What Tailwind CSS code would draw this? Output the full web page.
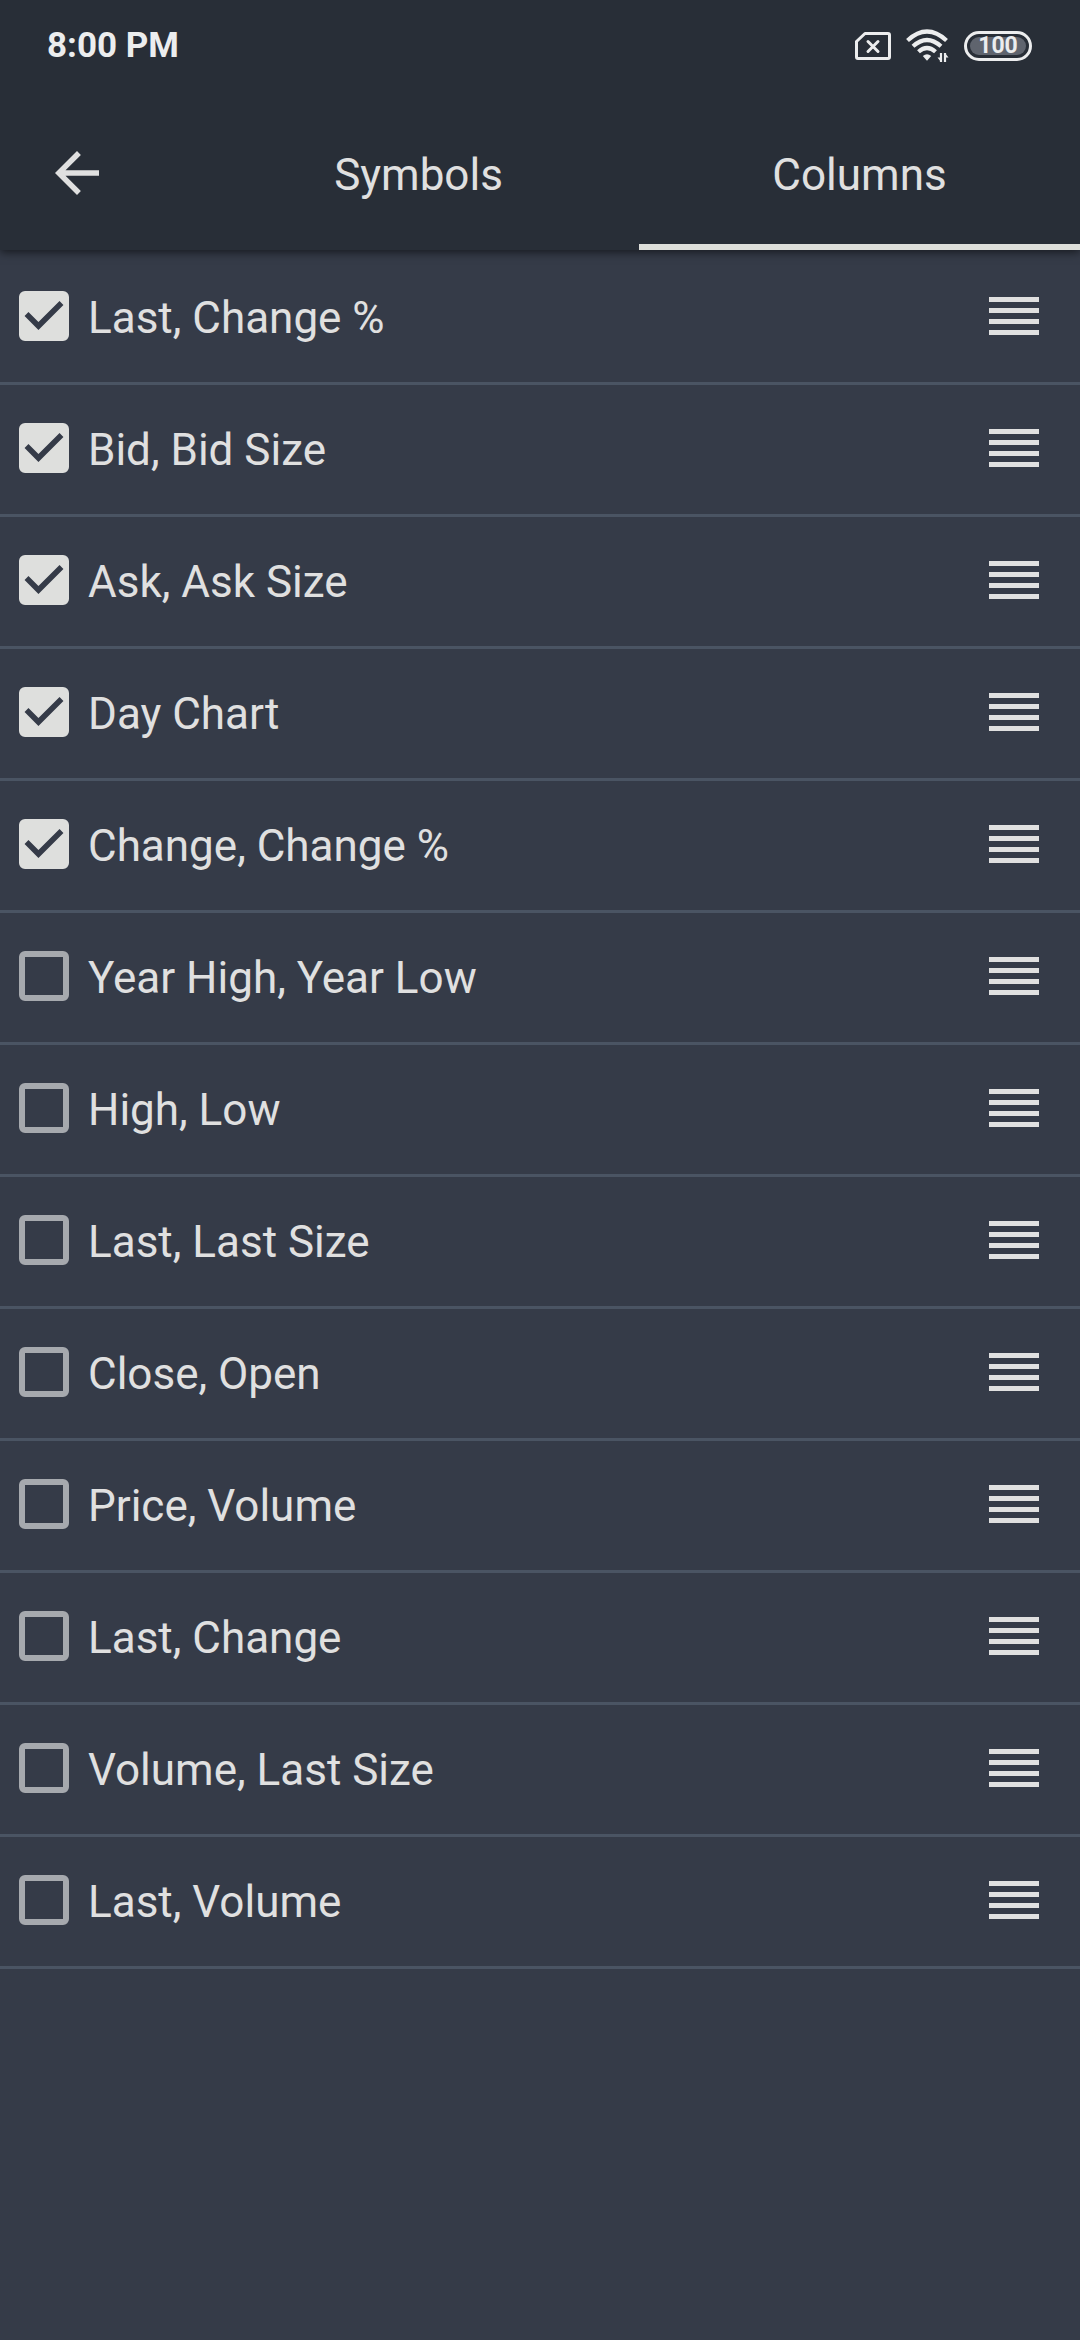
<!DOCTYPE html>
<html lang="en">
<head>
<meta charset="utf-8">
<meta name="viewport" content="width=device-width, initial-scale=1">
<title>Columns</title>
<script src="https://cdn.jsdelivr.net/npm/@tailwindcss/browser@4"></script>
</head>
<body class="min-h-screen bg-[#353b48] font-['Roboto',sans-serif] text-[#e0e0e0]">
<header class="relative z-10 bg-[#282e37] shadow-[0_2px_9px_rgba(0,0,0,0.6)]">
  <div class="flex h-24 items-center justify-between pr-12 pl-[47px] pb-1 text-[#ecedee]">
    <span class="text-[35px] leading-10 font-bold">8:00 PM</span>
    <div class="flex items-center">
      <svg class="h-7 w-9" viewBox="0 0 36 28" fill="none" stroke="currentColor" aria-label="No SIM">
        <path d="M10 1.5H33Q34.500 1.500 34.500 3V25Q34.500 26.500 33 26.500H3Q1.500 26.500 1.500 25V9.500Z" stroke-width="3" stroke-linejoin="round"/>
        <path d="M13 9.500L23 19.500M23 9.500L13 19.500" stroke-width="3" stroke-linecap="round"/>
      </svg>
      <svg class="ml-[15px] h-[34px] w-[43px]" viewBox="0 0 43 34" fill="none" stroke="currentColor" stroke-width="4.200" aria-label="Wi-Fi">
        <path d="M1.500 11.500Q21 -6.500 40.500 11.500"/>
        <path d="M7 17.300Q21 4.700 35 17.300"/>
        <path d="M12.500 22.800Q21 15.200 29.500 22.800"/>
        <path d="M16.800 27Q21 23.500 25.200 27L21 31.800Z" fill="currentColor" stroke="none"/>
        <path d="M35 24V33M39 33V24" stroke-width="2.200"/>
        <path d="M31.500 28.500H35V33ZM42.500 28.500H39V24Z" fill="currentColor" stroke="none"/>
      </svg>
      <div class="ml-[15px] flex h-[30px] w-[68px] rounded-full border-[3px] border-current p-[3px]">
        <span class="flex flex-1 items-center justify-center rounded-full bg-[#5f646e] text-[23px] leading-[18px] font-bold">100</span>
      </div>
    </div>
  </div>
  <nav class="flex h-[154px]">
    <button type="button" class="flex w-[198px] items-center pl-11" aria-label="Back">
      <svg class="size-[66px]" viewBox="0 0 24 24" fill="currentColor"><path d="M20 11H7.830l5.590-5.590L12 4l-8 8 8 8 1.410-1.410L7.830 13H20v-2z"/></svg>
    </button>
    <div class="grid flex-1 grid-cols-2 text-[44px] leading-[52px]" role="tablist">
      <button type="button" role="tab" aria-selected="false" class="border-b-6 border-transparent pt-[10px]">Symbols</button>
      <button type="button" role="tab" aria-selected="true" class="border-b-6 border-[#dedfdb] pt-[10px]">Columns</button>
    </div>
  </nav>
</header>
<main>
  <ul id="columns" class="pt-[3px]"></ul>
</main>
<script>
const columns = [
  ["Last, Change %", true],
  ["Bid, Bid Size", true],
  ["Ask, Ask Size", true],
  ["Day Chart", true],
  ["Change, Change %", true],
  ["Year High, Year Low", false],
  ["High, Low", false],
  ["Last, Last Size", false],
  ["Close, Open", false],
  ["Price, Volume", false],
  ["Last, Change", false],
  ["Volume, Last Size", false],
  ["Last, Volume", false],
];
document.getElementById("columns").innerHTML = columns.map(([name, on], i) => `
  <li class="flex h-[132px] items-center justify-between border-b-3 border-[#4a5463] pr-[41px] pb-[3px] pl-[19px]">
    <div class="flex flex-1 items-center gap-[19px]">
      <span class="grid size-[50px]">
        <input id="col-${i}" type="checkbox" ${on ? "checked" : ""} class="peer col-start-1 row-start-1 size-[50px] appearance-none rounded-md border-6 border-[#a6a9ae] checked:border-[#dedfdd] checked:bg-[#dedfdd]">
        <svg class="pointer-events-none invisible col-start-1 row-start-1 size-[50px] peer-checked:visible" viewBox="3 3 18 18" fill="#353b48" aria-hidden="true"><path d="M10 17l-5-5 1.410-1.410L10 14.170l7.590-7.590L19 8z"/></svg>
      </span>
      <label for="col-${i}" class="flex-1 pt-1 text-[44px] leading-[52px]">${name}</label>
    </div>
    <button type="button" aria-label="Reorder ${name}" class="flex w-[50px] flex-col gap-[6px]">
      <span class="h-[5px] w-full bg-current"></span>
      <span class="h-[5px] w-full bg-current"></span>
      <span class="h-[5px] w-full bg-current"></span>
      <span class="h-[5px] w-full bg-current"></span>
    </button>
  </li>`).join("");
</script>
</body>
</html>
